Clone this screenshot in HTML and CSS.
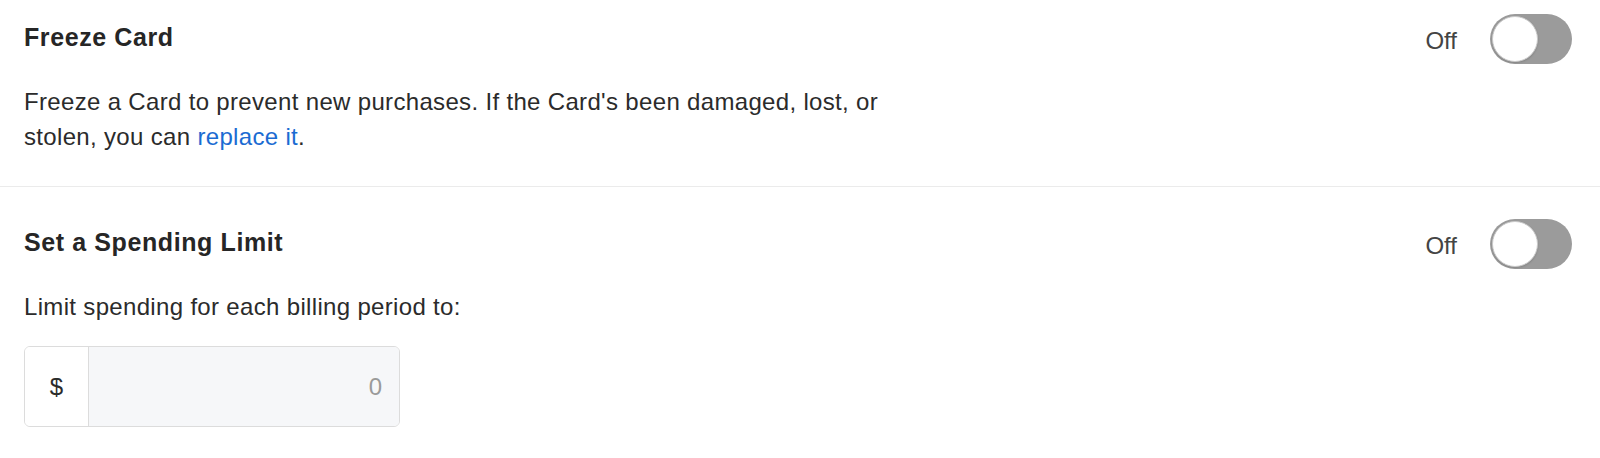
FILE: index.html
```html
<!DOCTYPE html>
<html lang="en">
<head>
<meta charset="utf-8">
<title>Card settings</title>
<link rel="stylesheet" href="styles.css">
</head>
<body>
<div class="panel">
  <section class="setting setting--freeze">
    <div class="setting-head">
      <h2 class="setting-title">Freeze Card</h2>
      <div class="switch-group">
        <span class="switch-label">Off</span>
        <span class="switch"><span class="switch-knob"></span></span>
      </div>
    </div>
    <p class="setting-desc">Freeze a Card to prevent new purchases. If the Card's been damaged, lost, or stolen, you can <a class="link" href="#">replace it</a>.</p>
  </section>
  <section class="setting setting--limit">
    <div class="setting-head">
      <h2 class="setting-title">Set a Spending Limit</h2>
      <div class="switch-group">
        <span class="switch-label">Off</span>
        <span class="switch"><span class="switch-knob"></span></span>
      </div>
    </div>
    <p class="setting-desc">Limit spending for each billing period to:</p>
    <div class="amount-field">
      <span class="amount-prefix">$</span>
      <span class="amount-value">0</span>
    </div>
  </section>
</div>
</body>
</html>
```
FILE: styles.css
```css
html, body {
  margin: 0;
  padding: 0;
  background: #ffffff;
}

body {
  font-family: "Liberation Sans", Arial, Helvetica, sans-serif;
  color: #2b2b2b;
}

.setting {
  padding: 14px 28px 32px 24px;
  border-bottom: 1px solid #ebebeb;
}

.setting--limit {
  padding-top: 32px;
  border-bottom: none;
}

.setting-head {
  display: flex;
  align-items: center;
  justify-content: space-between;
  height: 50px;
}

.setting-title {
  margin: 0 0 4px 0;
  font-size: 25px;
  line-height: 30px;
  font-weight: 700;
  letter-spacing: 0.6px;
  color: #262626;
}

.switch-group {
  display: flex;
  align-items: center;
  gap: 33px;
}

.switch-label {
  margin-top: 4px;
  font-size: 24px;
  line-height: 30px;
  color: #444444;
}

.switch {
  display: flex;
  align-items: center;
  box-sizing: border-box;
  width: 82px;
  height: 50px;
  padding: 2px;
  border-radius: 25px;
  background: #9b9b9b;
}

.switch-knob {
  box-sizing: border-box;
  width: 46px;
  height: 46px;
  border-radius: 50%;
  background: #ffffff;
  border: 1px solid #c9c9c9;
  box-shadow: 0 1px 2px rgba(0, 0, 0, 0.15);
}

.setting-desc {
  margin: 20px 0 0 0;
  max-width: 880px;
  font-size: 24px;
  line-height: 35px;
  letter-spacing: 0.33px;
  color: #2b2b2b;
}

.link {
  color: #1b6bd2;
  text-decoration: none;
}

.amount-field {
  display: flex;
  box-sizing: border-box;
  width: 376px;
  height: 81px;
  margin-top: 22px;
  border: 1px solid #dcdcdc;
  border-radius: 6px;
  overflow: hidden;
}

.amount-prefix {
  display: flex;
  align-items: center;
  justify-content: center;
  width: 63px;
  border-right: 1px solid #dcdcdc;
  background: #ffffff;
  font-size: 24px;
  color: #2b2b2b;
}

.amount-value {
  flex: 1;
  display: flex;
  align-items: center;
  justify-content: flex-end;
  padding-right: 17px;
  background: #f6f7f9;
  font-size: 24px;
  color: #9a9a9a;
}
```
